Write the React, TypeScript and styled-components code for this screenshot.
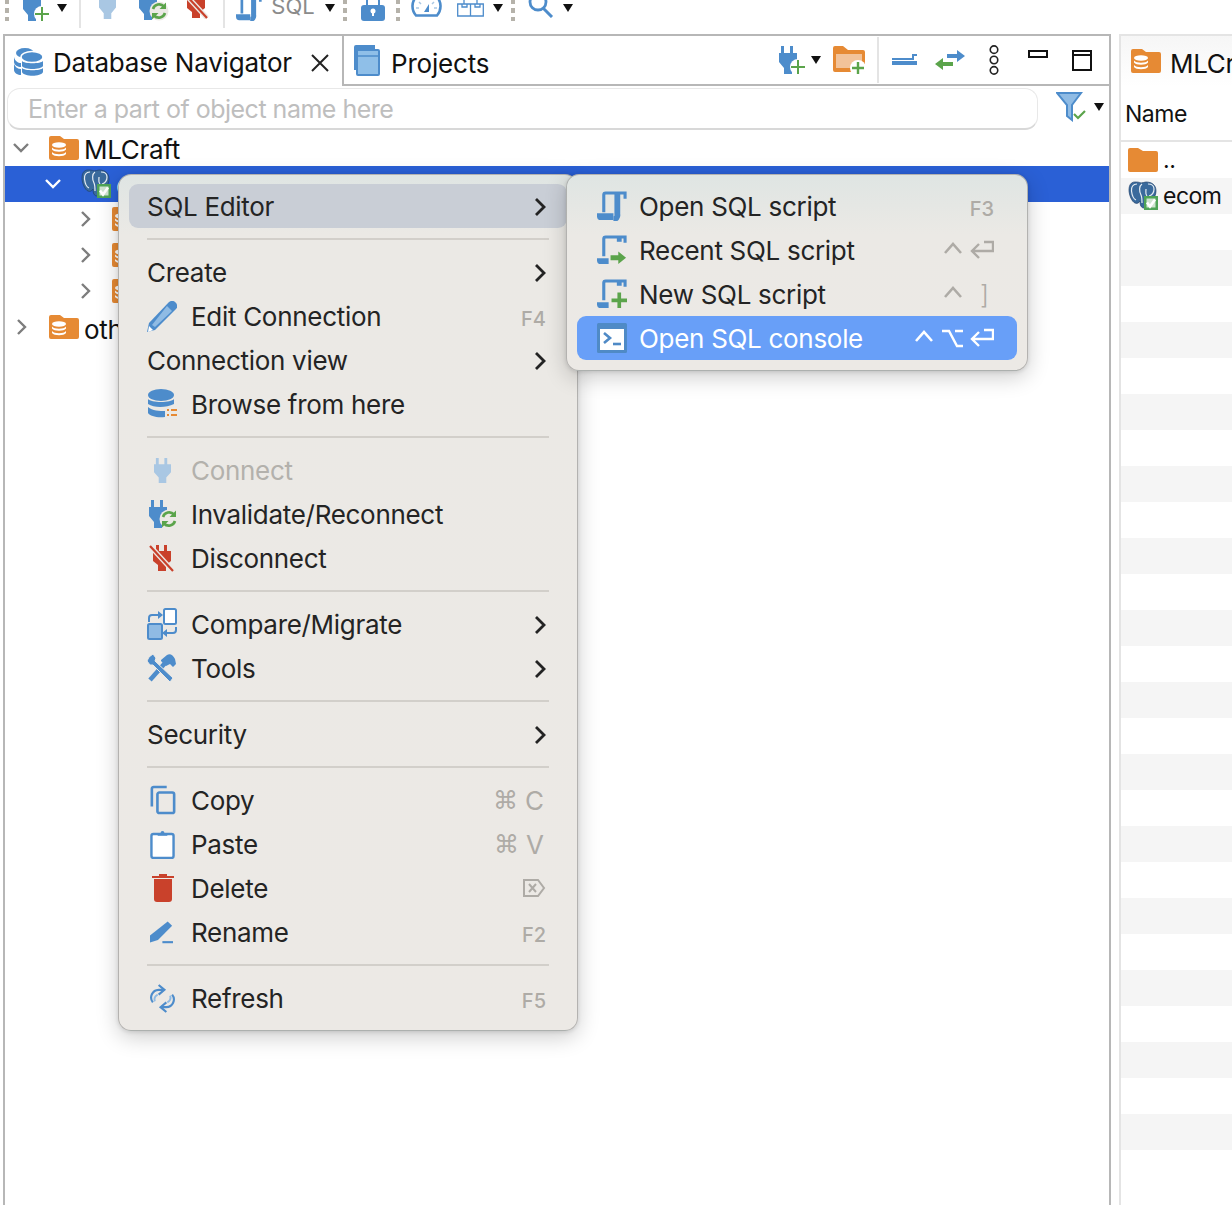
import React from "react";
import styled, { createGlobalStyle } from "styled-components";

const BLUE = "#4d8ccb";
const LIGHT = "#a9c7e3";
const ORANGE = "#e68a34";
const GREEN = "#5ba44b";
const RED = "#c9412b";
const KEY = "#aeaba6";

const Global = createGlobalStyle`
  html, body { margin: 0; padding: 0; background: #fff; overflow: hidden; }
  * { box-sizing: border-box; }
  svg { flex: none; display: block; }
  body { font-family: Inter, "Liberation Sans", sans-serif; color: #111; }
`;

const Page = styled.div`
  position: relative;
  width: 1232px;
  height: 1205px;
  overflow: hidden;
  background: #fff;
`;

/* ---------- top toolbar ---------- */
const Toolbar = styled.div`
  height: 34px;
  display: flex;
  align-items: flex-start;
  overflow: hidden;
  padding-left: 4px;
`;
const Slot = styled.div<{ $w: number; $pb?: number; $ml?: number }>`
  flex: none;
  width: ${(p) => p.$w}px;
  margin-left: ${(p) => p.$ml ?? 0}px;
  height: 27px;
  display: flex;
  align-items: flex-end;
  justify-content: center;
  padding-bottom: ${(p) => p.$pb ?? 6}px;
`;
const Grip = styled.span<{ $w: number }>`
  flex: none;
  width: ${(p) => p.$w}px;
  height: 21px;
  background: linear-gradient(#b5b2aa 5px, transparent 5px) center -1px / 4px 9px repeat-y;
`;
const ToolDivider = styled.span<{ $l: number; $r: number }>`
  flex: none;
  width: 2px;
  height: 28px;
  margin: 0 ${(p) => p.$r}px 0 ${(p) => p.$l}px;
  background: #e4e4e4;
`;
const SqlWord = styled.span`
  font-size: 22px;
  line-height: 22px;
  color: #8b8b8b;
  display: block;
  white-space: nowrap;
`;
const Tri = styled.span`
  display: inline-block;
  width: 0;
  height: 0;
  border-left: 5px solid transparent;
  border-right: 5px solid transparent;
  border-top: 8px solid #111;
`;

/* ---------- workspace ---------- */
const Workspace = styled.div`
  display: flex;
  height: 1171px;
  padding-left: 3px;
`;
const NavPane = styled.section`
  width: 1108px;
  flex: none;
  border: 2px solid #b7b7b7;
  border-bottom: 0;
  display: flex;
  flex-direction: column;
`;
const TabBar = styled.div`
  height: 50px;
  display: flex;
  flex: none;
`;
const ActiveTab = styled.div`
  width: 339px;
  flex: none;
  display: flex;
  align-items: center;
  padding: 0 0 0 8px;
  border-right: 2px solid #b7b7b7;
`;
const Tab = styled.div`
  display: flex;
  align-items: center;
  flex: 1;
  padding: 0 0 0 8px;
  border-bottom: 2px solid #b7b7b7;
`;
const TabLabel = styled.span<{ $mt: number; $ml: number }>`
  font-size: 26px;
  line-height: 32px;
  letter-spacing: -0.2px;
  color: #111;
  margin: ${(p) => p.$mt}px 0 0 ${(p) => p.$ml}px;
  white-space: nowrap;
`;
const TabClose = styled.span`
  margin: 3px 0 0 18px;
  display: flex;
`;
const Spacer = styled.div`
  flex: 1;
`;
const TabTool = styled.div<{ $w: number; $top?: number }>`
  flex: none;
  width: ${(p) => p.$w}px;
  display: flex;
  align-items: center;
  justify-content: center;
  align-self: ${(p) => (p.$top ? "flex-start" : "center")};
  padding-top: ${(p) => p.$top ?? 0}px;
`;
const TabDivider = styled.span`
  flex: none;
  width: 2px;
  height: 46px;
  margin-left: 4px;
  background: #e4e4e4;
`;
const SearchRow = styled.div`
  height: 44px;
  flex: none;
  display: flex;
  align-items: flex-start;
  padding: 2px 0 0 2px;
`;
const SearchBox = styled.div`
  width: 1031px;
  height: 42px;
  border: 1px solid #e8e8e8;
  border-bottom: 2px solid #d8d8d8;
  border-radius: 13px;
  font-size: 25px;
  letter-spacing: -0.5px;
  line-height: 41px;
  color: #bebebe;
  padding-left: 20px;
  background: #fff;
`;
const FilterSlot = styled.div`
  margin: 4px 0 0 18px;
  display: flex;
  align-items: center;
  gap: 8px;
`;
const Tree = styled.div`
  display: flex;
  flex-direction: column;
`;
const TreeRow = styled.div<{ $sel?: boolean; $depth: number }>`
  height: 36px;
  display: flex;
  align-items: center;
  padding-left: ${(p) => p.$depth}px;
  background: ${(p) => (p.$sel ? "#2a60d6" : "transparent")};
  color: ${(p) => (p.$sel ? "#fff" : "#111")};
  font-size: 26px;
  letter-spacing: -0.3px;
  white-space: nowrap;
`;
const TreeLabel = styled.span`
  margin: 2px 0 0 5px;
`;
const TreeToggle = styled.span<{ $up?: number }>`
  display: flex;
  margin-bottom: ${(p) => p.$up ?? 0}px;
`;
const TreeIcon = styled.span<{ $ml: number; $up?: number }>`
  margin-left: ${(p) => p.$ml}px;
  margin-bottom: ${(p) => p.$up ?? 0}px;
  display: flex;
`;

/* ---------- right panel ---------- */
const SidePane = styled.section`
  margin-left: 8px;
  flex: 1;
  min-width: 0;
  border-top: 2px solid #e4e4e4;
  border-left: 2px solid #e4e4e4;
  overflow: hidden;
`;
const SideTab = styled.div`
  height: 50px;
  display: flex;
  align-items: center;
  padding-left: 10px;
  white-space: nowrap;
  font-size: 26px;
  letter-spacing: -0.3px;
  background: linear-gradient(#f6f6f6, #fff);
`;
const SideTabLabel = styled.span`
  margin: 4px 0 0 9px;
`;
const ColHead = styled.div`
  height: 56px;
  display: flex;
  align-items: flex-end;
  padding: 0 0 11px 4px;
  font-size: 23px;
  letter-spacing: -0.5px;
  line-height: 30px;
  border-bottom: 2px solid #e4e4e4;
`;
const FileRow = styled.div<{ $alt: boolean }>`
  height: 36px;
  display: flex;
  align-items: center;
  padding-left: 7px;
  font-size: 23px;
  letter-spacing: -0.5px;
  background: ${(p) => (p.$alt ? "#f5f5f5" : "#fff")};
`;
const FileLabel = styled.span`
  margin-left: 5px;
`;

/* ---------- context menus ---------- */
const Item = styled.div<{ $active?: "soft" | "strong"; $dim?: boolean }>`
  height: 44px;
  display: flex;
  align-items: center;
  padding: 0 21px 0 18px;
  border-radius: 9px;
  font-size: 26px;
  letter-spacing: -0.3px;
  white-space: nowrap;
  color: ${(p) => (p.$active === "strong" ? "#fff" : p.$dim ? "#b3b1ac" : "#242424")};
  background: ${(p) =>
    p.$active === "strong" ? "#689ff8" : p.$active === "soft" ? "#c9ced6" : "transparent"};
`;
const Menu = styled.div<{ $x: number; $y: number; $w: number; $z: number; $pt: number; $pb: number }>`
  position: absolute;
  left: ${(p) => p.$x}px;
  top: ${(p) => p.$y}px;
  width: ${(p) => p.$w}px;
  z-index: ${(p) => p.$z};
  padding: ${(p) => p.$pt}px 10px ${(p) => p.$pb}px;
  border-radius: 13px;
  border: 1px solid rgba(90, 90, 90, 0.38);
  background: linear-gradient(#dfe5e3 0, #ebe9e5 60px, #ece9e5 100%);
  box-shadow: 0 6px 22px rgba(0, 0, 0, 0.2), 0 1px 4px rgba(0, 0, 0, 0.12);
`;
const SubMenu = styled(Menu)`
  ${Item} {
    padding-right: 23px;
  }
`;
const ItemIcon = styled.span<{ $ox?: number }>`
  flex: none;
  width: 44px;
  padding-left: ${(p) => p.$ox ?? 0}px;
  display: flex;
  align-items: center;
`;
const ItemLabel = styled.span`
  flex: 1;
`;
const Sep = styled.div`
  height: 2px;
  margin: 10px 18px;
  background: #d2cfca;
`;
const Keys = styled.span<{ $strong?: boolean }>`
  display: flex;
  align-items: center;
  gap: 7px;
  letter-spacing: 0;
  color: ${(p) => (p.$strong ? "#fff" : KEY)};
`;
const FnKey = styled.span`
  font-size: 20px;
  font-weight: 500;
  letter-spacing: 0;
  color: ${KEY};
  padding-top: 5px;
`;
const CmdKeys = styled(Keys)`
  font-size: 26px;
  gap: 7px;
  margin-right: 2px;
`;
const CmdGlyph = styled.span`
  font-family: "DejaVu Sans", sans-serif;
  font-size: 25px;
`;
const Bracket = styled.span`
  font-size: 26px;
  font-weight: 300;
  margin: 0 5px 0 10px;
`;
const Chevron = styled.span`
  display: flex;
  margin-top: 2px;
`;

/* ---------- icons ---------- */
type P = { c?: string };

const PLUG = "M5 1h3v7h6V1h3v7h4v9l-5 6v6H8v-6l-5-6V8h2z";

const PlugPlus = () => (
  <svg width="27" height="30" viewBox="0 0 27 30">
    <path fill={BLUE} transform="translate(-3 0)" d={PLUG} />
    <circle cx="19" cy="22" r="8" fill="#fff" />
    <path d="M19 15v14M12 22h14" stroke={GREEN} strokeWidth="2" />
  </svg>
);
const PlugLight = ({ h = 28 }: { h?: number }) => (
  <svg width="17" height={h} viewBox="3 0 18 29" preserveAspectRatio="none">
    <path fill={LIGHT} d={PLUG} />
  </svg>
);
const PlugReload = () => (
  <svg width="30" height="30" viewBox="0 0 30 30">
    <path fill={BLUE} transform="translate(-3 0)" d={PLUG} />
    <circle cx="20" cy="20" r="9.500" fill="#ece9e5" />
    <path d="M14 18a6.500 6.500 0 0 1 11-2.500M26 22a6.500 6.500 0 0 1-11 2.500" fill="none" stroke={GREEN} strokeWidth="2.600" />
    <path d="M27 11.500V18h-6.500zM13 28.500V22h6.500z" fill={GREEN} />
  </svg>
);
const PlugOff = () => (
  <svg width="26" height="28" viewBox="0 0 26 28">
    <path fill={RED} d="M7 1h3v6h5V1h3v6h4v10l-5 4v6H9v-6l-5-4V7h3z" />
    <path d="M1 2l23 25" stroke="#ece9e5" strokeWidth="5" />
    <path d="M1 2l23 25" stroke={RED} strokeWidth="2.200" />
  </svg>
);
const Scroll = ({ extra, size = 30 }: { extra?: "arrow" | "plus"; size?: number }) => (
  <svg width={size} height={size} viewBox="0 0 31 31">
    <path d="M7 22V4a2 2 0 0 1 2-2h20v6" fill="none" stroke={BLUE} strokeWidth="3.200" />
    {extra ? (
      <>
        <path d="M23 2v5" stroke={BLUE} strokeWidth="5" />
        <path d="M0 24h12v6H4a4 4 0 0 1-4-4z" fill={BLUE} />
      </>
    ) : (
      <>
        <path d="M21 2v22a4 4 0 0 1-4 5" fill="none" stroke={BLUE} strokeWidth="6" />
        <path d="M0 23h17v7H4a4 4 0 0 1-4-4z" fill={BLUE} />
      </>
    )}
    {extra === "arrow" && <path d="M14 21h8v-4l8 6.500-8 6.500v-4h-8z" fill={GREEN} />}
    {extra === "plus" && <path d="M23 14v16M15 22h16" stroke={GREEN} strokeWidth="3.800" />}
  </svg>
);
const Console = () => (
  <svg width="30" height="30" viewBox="0 0 30 30">
    <rect width="30" height="30" rx="1.500" fill="#4f8ac6" />
    <rect x="3" y="6" width="24" height="21" fill="#fff" />
    <path d="M7 10l6 5-6 5" fill="none" stroke="#4f8ac6" strokeWidth="2.600" />
    <path d="M16 21h8" stroke="#4f8ac6" strokeWidth="2.600" />
  </svg>
);
const NavDb = () => (
  <svg width="31" height="31" viewBox="0 0 31 31">
    <ellipse cx="12" cy="7" rx="9" ry="5" fill={BLUE} />
    <ellipse cx="19" cy="11" rx="11" ry="5.500" fill={BLUE} stroke="#fff" strokeWidth="1.500" />
    <path d="M1 11v5c0 3 4 5 7 5v-4c-3 0-6-2-7-6zM1 18v6c0 3 4 5 7 5v-6c-3 0-6-2-7-5z" fill={BLUE} />
    <path d="M9 15c2 3 19 3 21 0v5c-2 4-19 4-21 0zM9 22c2 3 19 3 21 0v4c-2 5-19 5-21 0z" fill={BLUE} />
  </svg>
);
const Browse = () => (
  <svg width="30" height="30" viewBox="0 0 30 30">
    <ellipse cx="14" cy="6" rx="13" ry="6" fill={BLUE} />
    <path d="M1 10c3 4 23 4 26 0v5c-8 4-20 4-26 0zM1 18c4 4 12 4 17 4v6C10 29 3 27 1 24z" fill={BLUE} />
    <path d="M20 20h2v2h-2zM24 20h6v2h-6zM20 25h2v2h-2zM24 25h6v2h-6z" fill={ORANGE} />
  </svg>
);
const DbFolder = () => (
  <svg width="30" height="24" viewBox="0 0 30 24">
    <path fill={ORANGE} d="M0 2a2 2 0 0 1 2-2h9l4 3h13a2 2 0 0 1 2 2v17a2 2 0 0 1-2 2H2a2 2 0 0 1-2-2z" />
    <ellipse cx="10" cy="9" rx="7" ry="2.700" fill="#fff" />
    <path d="M3 11.500c2 3 12 3 14 0v2c-2 3-12 3-14 0zM3 16c2 3 12 3 14 0v2c-2 3-12 3-14 0z" fill="#fff" />
  </svg>
);
const Folder = () => (
  <svg width="30" height="24" viewBox="0 0 30 24">
    <path fill={ORANGE} d="M0 2a2 2 0 0 1 2-2h8l5 3h13a2 2 0 0 1 2 2v17a2 2 0 0 1-2 2H2a2 2 0 0 1-2-2z" />
  </svg>
);
const FolderPlus = () => (
  <svg width="33" height="31" viewBox="0 0 33 31">
    <path fill={ORANGE} d="M0 3a2 2 0 0 1 2-2h8l5 4h15a2 2 0 0 1 2 2v18a2 2 0 0 1-2 2H2a2 2 0 0 1-2-2z" />
    <path fill="#f2c39a" d="M3 9h26v14H3z" />
    <circle cx="25" cy="23" r="8" fill="#fff" />
    <path d="M25 17v12M19 23h12" stroke={GREEN} strokeWidth="2.400" />
  </svg>
);
const Pg = () => (
  <svg width="30" height="30" viewBox="0 0 30 30">
    <path
      d="M7 1C3 1 1 4 1 9c0 5 3 12 6 13 2 1 4 0 5-2 0 4 1 7 4 7l3-2c2-2 3-4 4-6 3-1 5-5 5-9 0-6-4-9-10-9-2 0-3 1-5 1-2-1-4-1-6-1z"
      fill="#3a6a9c"
      stroke="#20406a"
      strokeWidth="0.700"
    />
    <path d="M9 3C5 3 3 6 3.500 10c.5 4 2 8 4.500 9M14 3c-3 2-3 7-1 11 1 2 1 5 1 8M20 3c4 0 6 2 6 5 0 3-2 6-5 7M18 8c0 3-1 5 1 7" fill="none" stroke="#e6edf3" strokeWidth="1.200" />
    <rect x="16" y="15" width="14" height="14" fill="#4fa457" />
    <rect x="18.500" y="17.500" width="9" height="9" fill="#cfe4d0" />
    <path d="M19 21.500l3 4 5-7" fill="none" stroke="#fff" strokeWidth="2.600" />
  </svg>
);
const Pencil = () => (
  <svg width="30" height="31" viewBox="0 0 30 31">
    <path d="M22 1a5 5 0 0 1 7 7L8 29l-8 2 2-9z" fill={BLUE} />
    <path d="M20 5l5 5L8 26l-3-2z" fill="#8fbbe4" />
    <path d="M2 25l4 4-5 2z" fill="#fff" />
  </svg>
);
const Compare = () => (
  <svg width="30" height="32" viewBox="0 0 30 32">
    <rect x="1" y="16" width="14" height="15" rx="1.500" fill="#8fbbe4" stroke={BLUE} strokeWidth="2" />
    <rect x="17" y="1" width="12" height="15" rx="1.500" fill="#fff" stroke={BLUE} strokeWidth="2" />
    <path d="M2 14v-4a3 3 0 0 1 3-3h8M29 19v3a3 3 0 0 1-3 3h-8" fill="none" stroke={BLUE} strokeWidth="2" />
    <path d="M11 3l5 4-5 4zM20 21l-5 4 5 4z" fill={BLUE} />
  </svg>
);
const Tools = () => (
  <svg width="30" height="30" viewBox="0 0 30 30">
    <path d="M3 27L19 9" stroke={BLUE} strokeWidth="4.500" />
    <path d="M14 7l6-5c3-2 6 0 8 4l1 5-3 3-3-3-4 2-5-5z" fill={BLUE} />
    <path d="M2 4l4-3 3 4-1 3 18 17-3 4L6 12 3 12 0 8z" fill={BLUE} stroke="#ece9e5" strokeWidth="1" />
  </svg>
);
const Copy = () => (
  <svg width="26" height="30" viewBox="0 0 28 32">
    <path d="M18 2H4a2 2 0 0 0-2 2v19" fill="none" stroke={BLUE} strokeWidth="2.800" />
    <rect x="8" y="8" width="18" height="22" rx="2" fill="none" stroke={BLUE} strokeWidth="2.800" />
  </svg>
);
const Paste = () => (
  <svg width="25" height="29" viewBox="0 0 26 30">
    <rect x="1.500" y="4" width="23" height="25" rx="2" fill="#fff" stroke={BLUE} strokeWidth="2.500" />
    <path d="M8 6V3h3a2 2 0 0 1 4 0h3v3z" fill={BLUE} />
  </svg>
);
const Trash = () => (
  <svg width="22" height="28" viewBox="0 0 22 28">
    <path d="M0 2h7V0h8v2h7v2H0z" fill={RED} />
    <path d="M2 5h18v20a3 3 0 0 1-3 3H5a3 3 0 0 1-3-3z" fill={RED} />
  </svg>
);
const Rename = () => (
  <svg width="23" height="24" viewBox="0 0 26 26">
    <path d="M20 1l5 5L9 22l-9 3v-8z" fill={BLUE} />
    <path d="M14 24.500h12" stroke={BLUE} strokeWidth="2.400" />
  </svg>
);
const Refresh = () => (
  <svg width="27" height="29" viewBox="0 0 28 30">
    <path d="M15 6H10a8 8 0 0 0-6 13M13 24h5a8 8 0 0 0 6-13" fill="none" stroke={BLUE} strokeWidth="2.200" />
    <path d="M10 1l6 5-6 5M18 19l-6 5 6 5" fill="none" stroke={BLUE} strokeWidth="2.200" />
    <path d="M9 11a6 6 0 0 0-3 7M19 19a6 6 0 0 0 3-7" fill="none" stroke="#8fbbe4" strokeWidth="2" />
  </svg>
);
const SubArrow = ({ c = "#232323" }: P) => (
  <svg width="12" height="20" viewBox="0 0 12 20">
    <path d="M2 2l8 8-8 8" fill="none" stroke={c} strokeWidth="2.800" />
  </svg>
);
const TreeChevron = ({ dir, c = "#7d7d7d" }: P & { dir: "down" | "right" }) => (
  <svg width="16" height="16" viewBox="0 0 16 16">
    <path d={dir === "down" ? "M1 4l7 7 7-7" : "M4 1l7 7-7 7"} fill="none" stroke={c} strokeWidth="2.400" />
  </svg>
);
const Ret = ({ c }: P) => (
  <svg width="24" height="20" viewBox="0 0 24 20">
    <path d="M14 2h9v9H3M9 4l-7 7 7 7" fill="none" stroke={c} strokeWidth="2.400" />
  </svg>
);
const Del = () => (
  <svg width="24" height="20" viewBox="0 0 24 20">
    <path d="M2 2h14l6 8-6 8H2z" fill="none" stroke={KEY} strokeWidth="2" />
    <path d="M7 6l7 8M14 6l-7 8" stroke={KEY} strokeWidth="2" />
  </svg>
);
const Caret = ({ c }: P) => (
  <svg width="20" height="16" viewBox="0 0 20 16">
    <path d="M2 11l8-9 8 9" fill="none" stroke={c} strokeWidth="2.600" />
  </svg>
);
const Opt = ({ c }: P) => (
  <svg width="22" height="20" viewBox="0 0 22 20">
    <path d="M1 3h7l8 15h6M14 3h8" fill="none" stroke={c} strokeWidth="2.400" />
  </svg>
);
const CloseX = () => (
  <svg width="20" height="20" viewBox="0 0 20 20">
    <path d="M2 2l16 16M18 2L2 18" stroke="#222" strokeWidth="2" />
  </svg>
);
const ProjectsIcon = () => (
  <svg width="28" height="32" viewBox="0 0 28 32">
    <path d="M2 26V3a2 2 0 0 1 2-2h19v4H6v21z" fill={BLUE} />
    <rect x="5" y="6" width="22" height="25" rx="1" fill="#8fbfe8" stroke={BLUE} strokeWidth="2" />
    <path d="M5 12h22" stroke={BLUE} strokeWidth="1.500" />
  </svg>
);
const Collapse = () => (
  <svg width="26" height="12" viewBox="0 0 26 12">
    <path d="M0 4h20V0h5v2h-3v4H0zM0 7h25v4H0z" fill={BLUE} />
  </svg>
);
const Link = () => (
  <svg width="30" height="20" viewBox="0 0 30 20">
    <path d="M12 4h10V0l8 6-8 6V8H12z" fill={BLUE} />
    <path d="M18 12H8V8l-8 6 8 6v-4h10z" fill={GREEN} />
  </svg>
);
const Kebab = () => (
  <svg width="12" height="32" viewBox="0 0 12 34">
    <circle cx="6" cy="6" r="4" fill="none" stroke="#222" strokeWidth="1.700" />
    <circle cx="6" cy="17" r="4" fill="none" stroke="#222" strokeWidth="1.700" />
    <circle cx="6" cy="28" r="4" fill="none" stroke="#222" strokeWidth="1.700" />
  </svg>
);
const Minimize = () => (
  <svg width="20" height="8" viewBox="0 0 20 8">
    <rect x="1" y="1" width="18" height="6" fill="none" stroke="#111" strokeWidth="2" />
  </svg>
);
const Maximize = () => (
  <svg width="20" height="21" viewBox="0 0 20 21">
    <rect x="1" y="1" width="18" height="19" fill="none" stroke="#111" strokeWidth="2" />
    <path d="M1 5h18" stroke="#111" strokeWidth="2" />
  </svg>
);
const Funnel = () => (
  <svg width="30" height="30" viewBox="0 0 30 30">
    <path d="M1 1h24l-9 12v15l-5-4V13z" fill="#8fbbe4" stroke={BLUE} strokeWidth="2" />
    <path d="M18 22l4 4 7-7" fill="none" stroke={GREEN} strokeWidth="2.200" />
  </svg>
);
const Lock = () => (
  <svg width="24" height="26" viewBox="0 0 24 26">
    <path d="M6 10V6a6 6 0 0 1 12 0v4" fill="none" stroke={BLUE} strokeWidth="2" />
    <rect y="10" width="24" height="16" rx="3" fill={BLUE} />
    <circle cx="12" cy="16" r="2.500" fill="#fff" />
    <path d="M11 17h2v4h-2z" fill="#fff" />
  </svg>
);
const Gauge = () => (
  <svg width="31" height="20" viewBox="0 0 31 20">
    <path d="M5 18.500a14 14 0 1 1 21 0z" fill="#fff" stroke={BLUE} strokeWidth="2.600" />
    <path d="M13 15l5-8 0 8z" fill={BLUE} />
    <path d="M5 11h3M23 11h3M8 5l2 2M23 5l-2 2" stroke="#a9c7e3" strokeWidth="1.500" />
  </svg>
);
const Boxes = () => (
  <svg width="27" height="20" viewBox="0 0 27 20">
    <path d="M.7 7h12.800v12H.7zM13.500 7h12.800v12H13.500zM5 7v3h5V7M18 7v3h5V7M7 7V1M20 7V1M7 1h13" fill="none" stroke={BLUE} strokeWidth="1.300" />
  </svg>
);
const Search = () => (
  <svg width="26" height="26" viewBox="0 0 26 26">
    <circle cx="10" cy="10" r="8" fill="none" stroke={BLUE} strokeWidth="2.800" />
    <path d="M15 16l9 9" stroke={BLUE} strokeWidth="3" />
  </svg>
);

const stripes = Array.from({ length: 27 }, (_, i) => i);

export default function App() {
  return (
    <Page>
      <Global />
      <Toolbar>
        <Grip $w={6} />
        <Slot $ml={13} $w={26} $pb={5}><PlugPlus /></Slot>
        <Slot $w={26} $pb={15}><Tri /></Slot>
        <ToolDivider $l={4} $r={0} />
        <Slot $w={53} $pb={8}><PlugLight /></Slot>
        <Slot $w={40} $pb={6}><PlugReload /></Slot>
        <Slot $w={44} $pb={8}><PlugOff /></Slot>
        <ToolDivider $l={5} $r={11} />
        <Slot $w={26} $pb={6}><Scroll size={26} /></Slot>
        <Slot $w={62} $pb={10}><SqlWord>SQL</SqlWord></Slot>
        <Slot $w={12} $pb={15}><Tri /></Slot>
        <Grip $w={18} />
        <Slot $w={38} $pb={6}><Lock /></Slot>
        <Grip $w={12} />
        <Slot $w={45} $pb={10}><Gauge /></Slot>
        <Slot $w={43} $pb={10}><Boxes /></Slot>
        <Slot $w={12} $pb={15}><Tri /></Slot>
        <Grip $w={18} />
        <Slot $w={37} $pb={9}><Search /></Slot>
        <Slot $w={18} $pb={15}><Tri /></Slot>
      </Toolbar>

      <Workspace>
        <NavPane>
          <TabBar>
            <ActiveTab>
              <NavDb />
              <TabLabel $mt={4} $ml={9}>Database Navigator</TabLabel>
              <TabClose><CloseX /></TabClose>
            </ActiveTab>
            <Tab>
              <ProjectsIcon />
              <TabLabel $mt={7} $ml={11}>Projects</TabLabel>
              <Spacer />
              <TabTool $w={30}><PlugPlus /></TabTool>
              <TabTool $w={18}><Tri /></TabTool>
              <TabTool $w={48}><FolderPlus /></TabTool>
              <TabDivider />
              <TabTool $w={52}><Collapse /></TabTool>
              <TabTool $w={38}><Link /></TabTool>
              <TabTool $w={50}><Kebab /></TabTool>
              <TabTool $w={38} $top={14}><Minimize /></TabTool>
              <TabTool $w={50} $top={14}><Maximize /></TabTool>
              <TabTool $w={2} />
            </Tab>
          </TabBar>
          <SearchRow>
            <SearchBox>Enter a part of object name here</SearchBox>
            <FilterSlot><Funnel /><Tri /></FilterSlot>
          </SearchRow>
          <Tree>
            <TreeRow $depth={8}>
              <TreeToggle><TreeChevron dir="down" /></TreeToggle>
              <TreeIcon $ml={20}><DbFolder /></TreeIcon>
              <TreeLabel>MLCraft</TreeLabel>
            </TreeRow>
            <TreeRow $depth={40} $sel>
              <TreeToggle><TreeChevron dir="down" c="#fff" /></TreeToggle>
              <TreeIcon $ml={20}><Pg /></TreeIcon>
              <TreeLabel>ecom</TreeLabel>
            </TreeRow>
            <TreeRow $depth={73}>
              <TreeToggle $up={3}><TreeChevron dir="right" /></TreeToggle>
              <TreeIcon $ml={18} $up={2}><DbFolder /></TreeIcon>
            </TreeRow>
            <TreeRow $depth={73}>
              <TreeToggle $up={3}><TreeChevron dir="right" /></TreeToggle>
              <TreeIcon $ml={18} $up={2}><DbFolder /></TreeIcon>
            </TreeRow>
            <TreeRow $depth={73}>
              <TreeToggle $up={3}><TreeChevron dir="right" /></TreeToggle>
              <TreeIcon $ml={18} $up={2}><DbFolder /></TreeIcon>
            </TreeRow>
            <TreeRow $depth={9}>
              <TreeToggle $up={3}><TreeChevron dir="right" /></TreeToggle>
              <TreeIcon $ml={19} $up={2}><DbFolder /></TreeIcon>
              <TreeLabel>other</TreeLabel>
            </TreeRow>
          </Tree>
        </NavPane>

        <SidePane>
          <SideTab>
            <DbFolder />
            <SideTabLabel>MLCraft</SideTabLabel>
          </SideTab>
          <ColHead>Name</ColHead>
          <FileRow $alt={false}>
            <Folder />
            <FileLabel>..</FileLabel>
          </FileRow>
          <FileRow $alt>
            <Pg />
            <FileLabel>ecom</FileLabel>
          </FileRow>
          {stripes.map((i) => (
            <FileRow key={i} $alt={i % 2 === 1} />
          ))}
        </SidePane>
      </Workspace>

      <Menu $x={118} $y={174} $w={460} $z={1} $pt={9} $pb={10}>
        <Item $active="soft">
          <ItemLabel>SQL Editor</ItemLabel>
          <Chevron><SubArrow /></Chevron>
        </Item>
        <Sep />
        <Item>
          <ItemLabel>Create</ItemLabel>
          <Chevron><SubArrow /></Chevron>
        </Item>
        <Item>
          <ItemIcon><Pencil /></ItemIcon>
          <ItemLabel>Edit Connection</ItemLabel>
          <FnKey>F4</FnKey>
        </Item>
        <Item>
          <ItemLabel>Connection view</ItemLabel>
          <Chevron><SubArrow /></Chevron>
        </Item>
        <Item>
          <ItemIcon><Browse /></ItemIcon>
          <ItemLabel>Browse from here</ItemLabel>
        </Item>
        <Sep />
        <Item $dim>
          <ItemIcon $ox={7}><PlugLight h={26} /></ItemIcon>
          <ItemLabel>Connect</ItemLabel>
        </Item>
        <Item>
          <ItemIcon $ox={2}><PlugReload /></ItemIcon>
          <ItemLabel>Invalidate/Reconnect</ItemLabel>
        </Item>
        <Item>
          <ItemIcon $ox={2}><PlugOff /></ItemIcon>
          <ItemLabel>Disconnect</ItemLabel>
        </Item>
        <Sep />
        <Item>
          <ItemIcon><Compare /></ItemIcon>
          <ItemLabel>Compare/Migrate</ItemLabel>
          <Chevron><SubArrow /></Chevron>
        </Item>
        <Item>
          <ItemIcon><Tools /></ItemIcon>
          <ItemLabel>Tools</ItemLabel>
          <Chevron><SubArrow /></Chevron>
        </Item>
        <Sep />
        <Item>
          <ItemLabel>Security</ItemLabel>
          <Chevron><SubArrow /></Chevron>
        </Item>
        <Sep />
        <Item>
          <ItemIcon $ox={3}><Copy /></ItemIcon>
          <ItemLabel>Copy</ItemLabel>
          <CmdKeys><CmdGlyph>⌘</CmdGlyph>C</CmdKeys>
        </Item>
        <Item>
          <ItemIcon $ox={3}><Paste /></ItemIcon>
          <ItemLabel>Paste</ItemLabel>
          <CmdKeys><CmdGlyph>⌘</CmdGlyph>V</CmdKeys>
        </Item>
        <Item>
          <ItemIcon $ox={5}><Trash /></ItemIcon>
          <ItemLabel>Delete</ItemLabel>
          <Keys><Del /></Keys>
        </Item>
        <Item>
          <ItemIcon $ox={3}><Rename /></ItemIcon>
          <ItemLabel>Rename</ItemLabel>
          <FnKey>F2</FnKey>
        </Item>
        <Sep />
        <Item>
          <ItemIcon $ox={2}><Refresh /></ItemIcon>
          <ItemLabel>Refresh</ItemLabel>
          <FnKey>F5</FnKey>
        </Item>
      </Menu>

      <SubMenu $x={566} $y={174} $w={462} $z={2} $pt={9} $pb={10}>
        <Item>
          <ItemIcon $ox={2}><Scroll /></ItemIcon>
          <ItemLabel>Open SQL script</ItemLabel>
          <FnKey>F3</FnKey>
        </Item>
        <Item>
          <ItemIcon $ox={2}><Scroll extra="arrow" /></ItemIcon>
          <ItemLabel>Recent SQL script</ItemLabel>
          <Keys><Caret c={KEY} /><Ret c={KEY} /></Keys>
        </Item>
        <Item>
          <ItemIcon $ox={2}><Scroll extra="plus" /></ItemIcon>
          <ItemLabel>New SQL script</ItemLabel>
          <Keys><Caret c={KEY} /><Bracket>]</Bracket></Keys>
        </Item>
        <Item $active="strong">
          <ItemIcon $ox={2}><Console /></ItemIcon>
          <ItemLabel>Open SQL console</ItemLabel>
          <Keys $strong><Caret c="#fff" /><Opt c="#fff" /><Ret c="#fff" /></Keys>
        </Item>
      </SubMenu>
    </Page>
  );
}
